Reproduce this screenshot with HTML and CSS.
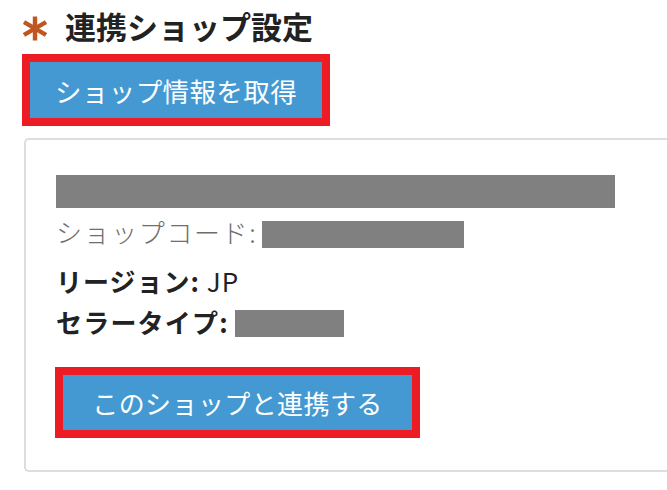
FILE: index.html
```html
<!DOCTYPE html>
<html lang="ja">
<head>
<meta charset="utf-8">
<title>連携ショップ設定</title>
<link rel="stylesheet" href="styles.css">
</head>
<body>
<section class="section">
  <h1 class="title">
    <svg class="asterisk" viewBox="0 0 24 24" width="24" height="24" aria-hidden="true">
      <g stroke="#c0561f" stroke-width="4.4" stroke-linecap="butt">
        <line x1="12" y1="0" x2="12" y2="24"/>
        <line x1="1" y1="5.6" x2="23" y2="18.4"/>
        <line x1="1" y1="18.4" x2="23" y2="5.6"/>
      </g>
    </svg>
    <span>連携ショップ設定</span>
  </h1>
  <div class="hl">
    <button class="btn btn-fetch" type="button">ショップ情報を取得</button>
  </div>
  <div class="card">
    <div class="bar"></div>
    <div class="row code">ショップコード:<span class="mask mask-code"></span></div>
    <div class="row region"><b>リージョン:</b> JP</div>
    <div class="row seller"><b>セラータイプ:</b><span class="mask mask-seller"></span></div>
    <div class="hl hl-link">
      <button class="btn btn-link" type="button">このショップと連携する</button>
    </div>
  </div>
</section>
</body>
</html>
```

FILE: styles.css
```css
html, body {
  margin: 0;
  padding: 0;
  background: #ffffff;
}

body {
  font-family: "Noto Sans CJK JP", "Noto Sans", sans-serif;
  color: #222222;
}

.section {
  padding: 4px 0 0 22px;
}

.title {
  margin: 0;
  display: flex;
  align-items: center;
  height: 44px;
  font-size: 31px;
  line-height: 44px;
  font-weight: 700;
  color: #222222;
}

.asterisk {
  display: block;
  width: 24px;
  height: 25px;
  margin: 4px 18px 0 1px;
}

.hl {
  display: inline-block;
  border: 8px solid #ed1c24;
  margin-top: 6px;
  line-height: 0;
}

.btn {
  display: block;
  border: 0;
  margin: 0;
  background: #4499d3;
  color: #ffffff;
  font-family: "Noto Sans CJK JP", "Noto Sans", sans-serif;
  font-size: 26px;
  letter-spacing: 0.4px;
  cursor: pointer;
}

.btn-fetch {
  width: 292px;
  height: 56px;
  padding: 0;
  font-size: 26.5px;
}

.card {
  margin: 12px 0 0 2px;
  border: 2px solid #dddddd;
  border-right: 0;
  border-radius: 5px 0 0 5px;
  padding: 35px 30px 32px 30px;
  font-size: 26px;
}

.bar {
  width: 559px;
  height: 33px;
  background: #808080;
}

.row {
  line-height: 39px;
  height: 39px;
  white-space: nowrap;
}

.row b {
  font-weight: 700;
}

.code {
  margin-top: 4px;
  color: #6e6e6e;
  font-weight: 300;
  letter-spacing: 1.6px;
}

.region {
  margin-top: 10px;
  color: #222222;
  font-weight: 400;
  letter-spacing: 1px;
}

.seller {
  margin-top: 2px;
  letter-spacing: 1.2px;
}

.mask {
  display: inline-block;
  background: #808080;
  height: 27px;
}

.mask-code {
  width: 202px;
  margin-left: 5px;
  vertical-align: -5px;
}

.mask-seller {
  width: 109px;
  margin-left: 6px;
  vertical-align: -4px;
}

.hl-link {
  margin-top: 26px;
  margin-left: -1px;
}

.btn-link {
  width: 349px;
  height: 55px;
  padding: 0;
}
```
